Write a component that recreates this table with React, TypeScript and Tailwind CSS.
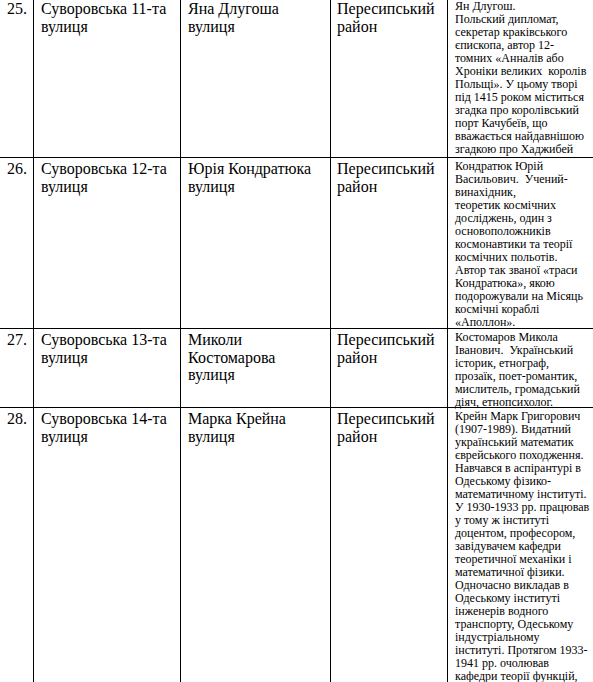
const rows = [
  {
    n: "25.",
    street: ["Суворовська 11-та", "вулиця"],
    name: ["Яна Длугоша", "вулиця"],
    h: "h-[160px]",
    note: [
      "Ян Длугош.",
      "Польский дипломат,",
      "секретар краківського",
      "єпископа, автор 12-",
      "томних «Анналів або",
      "Хроніки великих  королів",
      "Польщі». У цьому творі",
      "під 1415 роком міститься",
      "згадка про королівський",
      "порт Качубеїв, що",
      "вважається найдавнішою",
      "згадкою про Хаджибей",
    ],
  },
  {
    n: "26.",
    street: ["Суворовська 12-та", "вулиця"],
    name: ["Юрія Кондратюка", "вулиця"],
    h: "h-[171px]",
    note: [
      "Кондратюк Юрій",
      "Васильович.  Учений-",
      "винахідник,",
      "теоретик космічних",
      "досліджень, один з",
      "основоположників",
      "космонавтики та теорії",
      "космічних польотів.",
      "Автор так званої «траси",
      "Кондратюка», якою",
      "подорожували на Місяць",
      "космічні кораблі",
      "«Аполлон».",
    ],
  },
  {
    n: "27.",
    street: ["Суворовська 13-та", "вулиця"],
    name: ["Миколи", "Костомарова", "вулиця"],
    h: "h-[79px]",
    note: [
      "Костомаров Микола",
      "Іванович.  Український",
      "історик, етнограф,",
      "прозаїк, поет-романтик,",
      "мислитель, громадський",
      "діяч, етнопсихолог.",
    ],
  },
  {
    n: "28.",
    street: ["Суворовська 14-та", "вулиця"],
    name: ["Марка Крейна", "вулиця"],
    h: "h-[290px]",
    note: [
      "Крейн Марк Григорович",
      "(1907-1989). Видатний",
      "український математик",
      "єврейського походження.",
      "Навчався в аспірантурі в",
      "Одеському фізико-",
      "математичному інституті.",
      "У 1930-1933 рр. працював",
      "у тому ж інституті",
      "доцентом, професором,",
      "завідувачем кафедри",
      "теоретичної механіки і",
      "математичної фізики.",
      "Одночасно викладав в",
      "Одеському інституті",
      "інженерів водного",
      "транспорту, Одеському",
      "індустріальному",
      "інституті. Протягом 1933-",
      "1941 рр. очолював",
      "кафедри теорії функцій,",
    ],
  },
];

const Lines = ({ lines }: { lines: string[] }) => (
  <>
    {lines.map((l, i) => (
      <div key={i} className="whitespace-pre">
        {l}
      </div>
    ))}
  </>
);

export default function App() {
  return (
    <div className="h-[682px] overflow-hidden bg-white font-['Liberation_Serif',serif] text-black">
      <div className="-mt-[2px]">
        {rows.map((r) => (
          <div key={r.n} className={`flex border-b border-black ${r.h}`}>
            <div className="w-[34px] shrink-0 border-r border-black pl-[7px] pt-[2px] text-[16px] leading-[17.5px]">
              {r.n}
            </div>
            <div className="w-[147px] shrink-0 border-r border-black pl-[7px] pt-[2px] text-[16px] leading-[17.5px]">
              <Lines lines={r.street} />
            </div>
            <div className="w-[150px] shrink-0 border-r border-black pl-[7px] pt-[2px] text-[16px] leading-[17.5px]">
              <Lines lines={r.name} />
            </div>
            <div className="w-[117px] shrink-0 border-r border-black pl-[6px] pt-[2px] text-[16px] leading-[17.5px]">
              <Lines lines={["Пересипський", "район"]} />
            </div>
            <div className="flex-1 pl-[7px] pt-[2px] text-[12px] leading-[13px]">
              <Lines lines={r.note} />
            </div>
          </div>
        ))}
      </div>
    </div>
  );
}
